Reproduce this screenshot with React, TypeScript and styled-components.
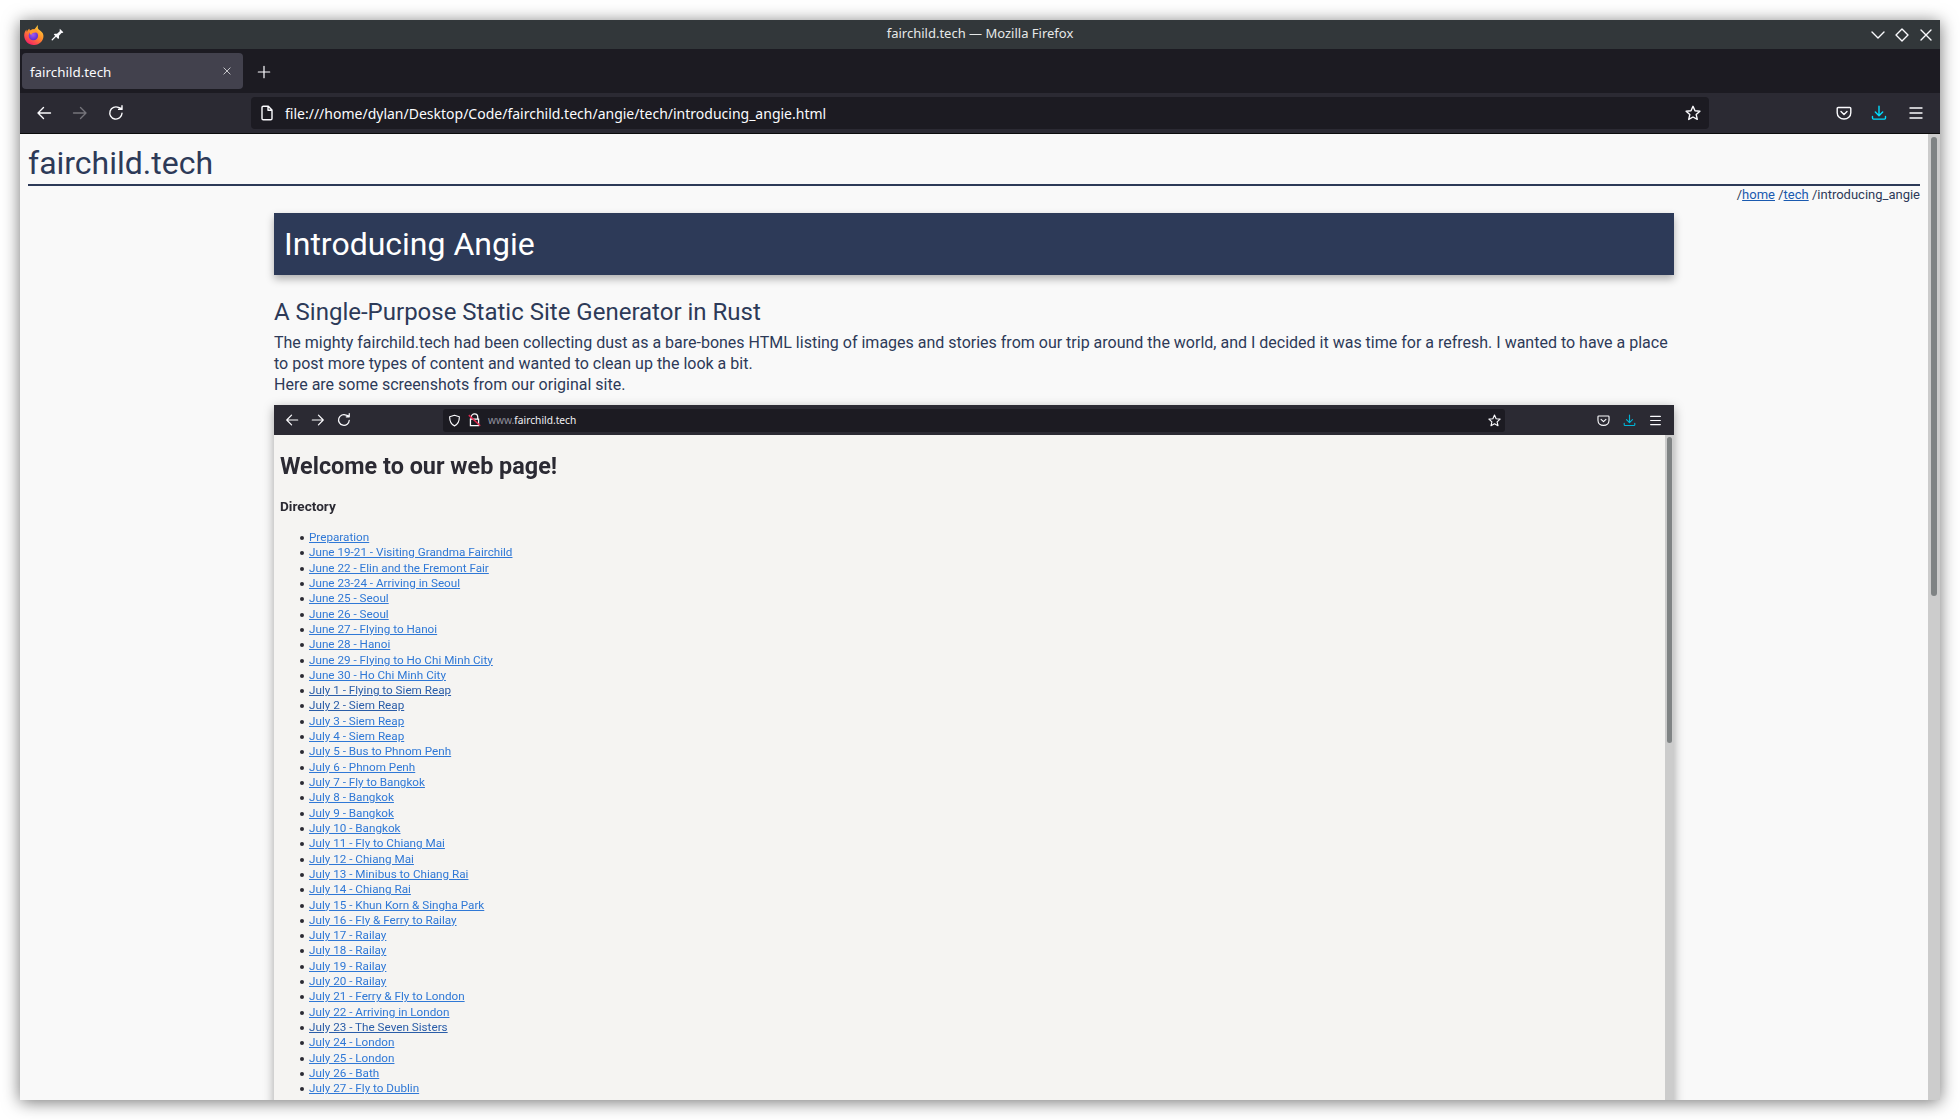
import React from 'react';
import styled, {createGlobalStyle} from 'styled-components';

const navy = '#2d3a58';
const chrome = '#2b2a33';
const urlBg = '#1c1b22';

const GlobalStyle = createGlobalStyle`
  html, body {
    margin: 0;
    padding: 0;
    background: #fff;
  }
  body {
    width: 1960px;
    height: 1120px;
    overflow: hidden;
  }
`;

const entries: [string, boolean?][] = [
    ['Preparation'],
    ['June 19-21 - Visiting Grandma Fairchild'],
    ['June 22 - Elin and the Fremont Fair'],
    ['June 23-24 - Arriving in Seoul'],
    ['June 25 - Seoul'],
    ['June 26 - Seoul'],
    ['June 27 - Flying to Hanoi'],
    ['June 28 - Hanoi'],
    ['June 29 - Flying to Ho Chi Minh City'],
    ['June 30 - Ho Chi Minh City'],
    ['July 1 - Flying to Siem Reap', true],
    ['July 2 - Siem Reap', true],
    ['July 3 - Siem Reap'],
    ['July 4 - Siem Reap'],
    ['July 5 - Bus to Phnom Penh'],
    ['July 6 - Phnom Penh'],
    ['July 7 - Fly to Bangkok'],
    ['July 8 - Bangkok'],
    ['July 9 - Bangkok'],
    ['July 10 - Bangkok'],
    ['July 11 - Fly to Chiang Mai'],
    ['July 12 - Chiang Mai'],
    ['July 13 - Minibus to Chiang Rai'],
    ['July 14 - Chiang Rai'],
    ['July 15 - Khun Korn & Singha Park'],
    ['July 16 - Fly & Ferry to Railay'],
    ['July 17 - Railay'],
    ['July 18 - Railay'],
    ['July 19 - Railay'],
    ['July 20 - Railay'],
    ['July 21 - Ferry & Fly to London'],
    ['July 22 - Arriving in London'],
    ['July 23 - The Seven Sisters', true],
    ['July 24 - London'],
    ['July 25 - London'],
    ['July 26 - Bath'],
    ['July 27 - Fly to Dublin'],
    ['July 28 - Dublin'],
];

const Desktop = styled.div`
  padding: 20px;
  width: 1920px;
  height: 1080px;
`;

const Window = styled.div`
  width: 1920px;
  height: 1080px;
  display: flex;
  flex-direction: column;
  overflow: hidden;
  background: #f9f9f9;
  box-shadow: 0 2px 16px rgba(0, 0, 0, .55);
`;

const TitleBar = styled.div`
  height: 29px;
  flex: none;
  background: #32373a;
  display: flex;
  align-items: center;
  padding: 0 4px 0 4px;
  position: relative;
`;

const TitleText = styled.div`
  position: absolute;
  left: 0;
  right: 0;
  top: 0;
  line-height: 27px;
  text-align: center;
  color: #e6e8e8;
  font-family: "Noto Sans", sans-serif;
  font-size: 13px;
  pointer-events: none;
`;

const TitleLeft = styled.div`
  display: flex;
  align-items: center;
  gap: 7px;
`;

const WindowControls = styled.div`
  margin-left: auto;
  display: flex;
  align-items: center;
  gap: 8px;
  padding-right: 2px;
`;

const TabBar = styled.div`
  height: 44px;
  flex: none;
  background: ${urlBg};
  display: flex;
  align-items: center;
  padding-left: 2px;
`;

const Tab = styled.div`
  width: 221px;
  height: 36px;
  box-sizing: border-box;
  background: #42414d;
  border-radius: 4px;
  display: flex;
  align-items: center;
  justify-content: space-between;
  padding: 0 11px 0 8px;
  color: #fbfbfe;
  font: 13.4px "Noto Sans", sans-serif;
`;

const TabLabel = styled.span`
  padding-top: 2px;
`;

const NewTab = styled.div`
  margin-left: 14px;
  padding-top: 1px;
  display: flex;
`;

const Toolbar = styled.div`
  height: 40px;
  flex: none;
  background: ${chrome};
  border-bottom: 1px solid #0c0c0d;
  display: flex;
  align-items: center;
  padding-left: 16px;
`;

const NavGroup = styled.div`
  display: flex;
  align-items: center;
  gap: 20px;
`;

const UrlBar = styled.div`
  width: 1458px;
  height: 32px;
  margin-left: 127px;
  background: ${urlBg};
  border-radius: 4px;
  display: flex;
  align-items: center;
  padding: 0 8px 0 8px;
  box-sizing: border-box;
  color: #fbfbfe;
  font: 14px "Noto Sans", sans-serif;
`;

const UrlText = styled.span`
  margin-left: 10px;
  flex: 1;
`;

const ToolbarEnd = styled.div`
  margin-left: 127px;
  display: flex;
  align-items: center;
  gap: 19px;
  svg:last-child {
    margin-left: 2px;
  }
`;

const Viewport = styled.div`
  flex: 1;
  min-height: 0;
  display: flex;
`;

const Page = styled.div`
  flex: 1;
  min-width: 0;
  padding: 0 8px;
  overflow: hidden;
  color: ${navy};
  font-family: Roboto, sans-serif;
`;

const Track = styled.div<{$width: number; $pad: number; $top: number}>`
  width: ${p => p.$width}px;
  flex: none;
  box-sizing: border-box;
  background: #cccccc;
  padding: ${p => p.$top}px ${p => p.$pad}px 0 ${p => p.$pad}px;
`;

const Thumb = styled.div<{$height: number}>`
  height: ${p => p.$height}px;
  background: #7f8384;
  border-radius: 3px;
`;

const SiteTitle = styled.div`
  height: 45px;
  padding-top: 5px;
  line-height: 48px;
  font-size: 32px;
  border-bottom: 2px solid ${navy};
`;

const Breadcrumb = styled.div`
  height: 18px;
  line-height: 18px;
  text-align: right;
  font-size: 13px;
  a {
    color: #1a5ab0;
  }
`;

const Column = styled.div`
  width: 1400px;
  margin: 9px auto 0;
`;

const Banner = styled.h1`
  margin: 0;
  height: 62px;
  padding: 0 10px;
  display: flex;
  align-items: center;
  background: ${navy};
  color: #fff;
  font-size: 32px;
  font-weight: 400;
  box-shadow: 0 4px 8px rgba(0, 0, 0, .3);
`;

const Subtitle = styled.h2`
  margin: 22px 0 5px;
  font-size: 24px;
  line-height: 30px;
  font-weight: 400;
`;

const Paragraph = styled.p`
  margin: 0 0 10px;
  font-size: 16px;
  line-height: 21px;
`;

const Shot = styled.div`
  height: 900px;
  display: flex;
  flex-direction: column;
  box-shadow: 0 3px 10px rgba(0, 0, 0, .35);
`;

const ShotToolbar = styled.div`
  height: 30px;
  flex: none;
  background: ${chrome};
  display: flex;
  align-items: center;
  padding-left: 11px;
`;

const ShotNav = styled.div`
  display: flex;
  align-items: center;
  gap: 12px;
`;

const ShotUrl = styled.div`
  width: 1062px;
  height: 23px;
  margin-left: 92px;
  box-sizing: border-box;
  background: ${urlBg};
  border-radius: 3px;
  display: flex;
  align-items: center;
  gap: 6px;
  padding: 0 4px 0 5px;
  color: #f1f1f4;
  font: 10.2px "Noto Sans", sans-serif;
  span {
    flex: 1;
    margin-left: 1px;
  }
  em {
    font-style: normal;
    color: #8f8f9d;
  }
`;

const ShotEnd = styled.div`
  margin-left: 92px;
  display: flex;
  align-items: center;
  gap: 13px;
`;

const ShotBody = styled.div`
  flex: 1;
  min-height: 0;
  display: flex;
  background: #f5f4f2;
`;

const ShotPage = styled.div`
  flex: 1;
  padding: 17px 0 0 6px;
  color: #2b2a33;
  filter: blur(.25px);
`;

const Welcome = styled.div`
  font-size: 23.4px;
  font-weight: 700;
  line-height: 28px;
`;

const Directory = styled.div`
  margin-top: 19px;
  font-size: 13.6px;
  font-weight: 700;
  line-height: 15px;
`;

const Entries = styled.ul`
  list-style: none;
  margin: 16px 0 0;
  padding-left: 29px;
  font-size: 11.7px;
  line-height: 15.31px;
`;

const Entry = styled.li`
  position: relative;
  &::before {
    content: '';
    position: absolute;
    left: -9px;
    top: 6px;
    width: 4px;
    height: 4px;
    border-radius: 50%;
    background: #2b2a33;
  }
`;

const EntryLink = styled.a<{$seen?: boolean}>`
  color: ${p => (p.$seen ? '#2a5da8' : '#2f78d6')};
  text-decoration: underline;
`;

const Svg = styled.svg<{$c?: string}>`
  display: block;
  flex: none;
  fill: none;
  stroke: ${p => p.$c || '#fbfbfe'};
  stroke-width: 1.4;
  stroke-linecap: round;
  stroke-linejoin: round;
`;

type IconProps = {size?: number; c?: string};

const icon = (body: React.ReactNode) => ({size = 16, c}: IconProps) => (
    <Svg $c={c} width={size} height={size} viewBox="0 0 16 16">{body}</Svg>
);

const BackIcon = icon(<path d="M14.5 8H2M7.5 2.5 2 8l5.5 5.5"/>);
const ForwardIcon = icon(<path d="M1.5 8H14M8.5 2.5 14 8l-5.5 5.5"/>);
const ReloadIcon = icon(<path d="M14 8.3A6.1 6.1 0 1 1 10.6 2.5L13.6 3.6M14 .8v3.6h-3.4"/>);
const PageIcon = icon(<path d="M3 2.5c0-.8.6-1.3 1.3-1.3h5L13 5v8.5c0 .7-.6 1.3-1.3 1.3H4.3C3.600 14.800 3 14.200 3 13.500zM9 1.500V5.300h4"/>);
const StarIcon = icon(<path d="M8 1.300l2 4.500 4.900.5-3.700 3.300 1.100 4.800L8 12l-4.300 2.400 1.100-4.800L1.100 6.300 6 5.800z"/>);
const PocketIcon = icon(<><path d="M2.200 2.500h11.600c.6 0 1 .4 1 1v4.200c0 3.800-3 6.300-6.800 6.300s-6.800-2.500-6.800-6.300V3.500c0-.6.4-1 1-1z"/><path d="M5 6.500l3 3 3-3"/></>);
const DownloadIcon = icon(<path d="M8 1.300V10.500M4.300 7 8 10.700 11.700 7M1.500 11.500v1.600c0 .6.400 1 1 1h11c.6 0 1-.4 1-1v-1.600"/>);
const MenuIcon = icon(<path d="M2 3h12M2 8h12M2 13h12"/>);
const CloseIcon = icon(<path d="M3 3l10 10M13 3 3 13"/>);
const PlusIcon = icon(<path d="M8 1.500v13M1.500 8h13"/>);
const ChevronIcon = icon(<path d="M2 5l6 6 6-6"/>);
const DiamondIcon = icon(<path d="M8 2l6 6-6 6-6-6z"/>);
const ShieldIcon = icon(<path d="M8 1.500 14 3.300c0 5.600-1.800 9.400-6 11.300C3.800 12.700 2 8.900 2 3.300z"/>);

const PinIcon = () => (
    <svg width="13" height="13" viewBox="0 0 16 16" style={{display: 'block'}}>
        <path fill="#fbfbfe" d="M10.800.8l4.400 4.400-1.200 1-1.100-.1-3.100 3.400.1 2.900-1 1.100-5.400-5.400 1-1.100 2.900.1 3.400-3.100-.1-1.100z"/>
        <path stroke="#fbfbfe" strokeWidth="1.500" strokeLinecap="round" d="M5.500 10.500 1.500 14.500"/>
    </svg>
);

const InsecureLockIcon = () => (
    <svg width="13" height="14" viewBox="0 0 16 16" fill="none" style={{display: 'block', flex: 'none', marginLeft: '1px'}}>
        <path d="M4 7V4.500a4 4 0 0 1 8 0V7M3 7h10v8H3z" stroke="#fbfbfe" strokeWidth="1.600"/>
        <path d="M1 2l14 13" stroke="#e22850" strokeWidth="1.800"/>
    </svg>
);

const FirefoxLogo = () => (
    <svg width="20" height="20" viewBox="0 0 32 32" style={{display: 'block'}}>
        <defs>
            <linearGradient id="ff-flame" x1="0.8" y1="0.05" x2="0.2" y2="1">
                <stop offset="0" stopColor="#ffd23c"/>
                <stop offset=".45" stopColor="#ff8a2b"/>
                <stop offset="1" stopColor="#f5156c"/>
            </linearGradient>
            <radialGradient id="ff-globe" cx=".45" cy=".4" r=".6">
                <stop offset="0" stopColor="#a45cf0"/>
                <stop offset="1" stopColor="#5a2bd0"/>
            </radialGradient>
        </defs>
        <path fill="url(#ff-flame)" d="M22 0c.5 3-1 5.500 2 7.500 4 2.700 6.500 4.500 7 9 .9 8-5.500 15-14.500 15.500C8 32.300.8 26.200.3 17.500.1 13.500 1.500 9.500 4 7c-.2 1.700 0 3 .8 4 .6-2.300 2-4 4.200-5-.3 1.500 0 2.500.8 3.200C12.500 7.500 14 7 16 7.500c2-2 3.500-4 6-7.500z"/>
        <circle cx="15" cy="17" r="7.500" fill="url(#ff-globe)"/>
        <path fill="#ff9a2e" d="M9 9.500c3-3 9-3.500 12.500-.5 2.500 2 3.500 5.500 2.500 8.500-.5-3-2.500-5.500-5.500-5.500-3.500 0-6 1-7 4-2-1.500-3.500-4-2.500-6.500z"/>
    </svg>
);

export default function App() {
    return (
        <>
            <GlobalStyle/>
            <Desktop>
                <Window>
                    <TitleBar>
                        <TitleLeft>
                            <FirefoxLogo/>
                            <PinIcon/>
                        </TitleLeft>
                        <TitleText>fairchild.tech — Mozilla Firefox</TitleText>
                        <WindowControls>
                            <ChevronIcon size={16}/>
                            <DiamondIcon size={16}/>
                            <CloseIcon size={16}/>
                        </WindowControls>
                    </TitleBar>
                    <TabBar>
                        <Tab>
                            <TabLabel>fairchild.tech</TabLabel>
                            <CloseIcon size={10} c="#d8d8dc"/>
                        </Tab>
                        <NewTab><PlusIcon size={14}/></NewTab>
                    </TabBar>
                    <Toolbar>
                        <NavGroup>
                            <BackIcon/>
                            <ForwardIcon c="#75747b"/>
                            <ReloadIcon/>
                        </NavGroup>
                        <UrlBar>
                            <PageIcon/>
                            <UrlText>file:///home/dylan/Desktop/Code/fairchild.tech/angie/tech/introducing_angie.html</UrlText>
                            <StarIcon/>
                        </UrlBar>
                        <ToolbarEnd>
                            <PocketIcon/>
                            <DownloadIcon c="#00ddff"/>
                            <MenuIcon/>
                        </ToolbarEnd>
                    </Toolbar>
                    <Viewport>
                        <Page>
                            <SiteTitle>fairchild.tech</SiteTitle>
                            <Breadcrumb>/<a href="#home">home</a> /<a href="#tech">tech</a> /introducing_angie</Breadcrumb>
                            <Column>
                                <Banner>Introducing Angie</Banner>
                                <Subtitle>A Single-Purpose Static Site Generator in Rust</Subtitle>
                                <Paragraph>
                                    The mighty fairchild.tech had been collecting dust as a bare-bones HTML listing of images and stories from our trip around the world, and I decided it was time for a refresh. I wanted to have a place to post more types of content and wanted to clean up the look a bit.
                                    <br/>
                                    Here are some screenshots from our original site.
                                </Paragraph>
                                <Shot>
                                    <ShotToolbar>
                                        <ShotNav>
                                            <BackIcon size={14}/>
                                            <ForwardIcon size={14}/>
                                            <ReloadIcon size={14}/>
                                        </ShotNav>
                                        <ShotUrl>
                                            <ShieldIcon size={13}/>
                                            <InsecureLockIcon/>
                                            <span><em>www.</em>fairchild.tech</span>
                                            <StarIcon size={13}/>
                                        </ShotUrl>
                                        <ShotEnd>
                                            <PocketIcon size={13}/>
                                            <DownloadIcon size={13} c="#00b3d6"/>
                                            <MenuIcon size={13}/>
                                        </ShotEnd>
                                    </ShotToolbar>
                                    <ShotBody>
                                        <ShotPage>
                                            <Welcome>Welcome to our web page!</Welcome>
                                            <Directory>Directory</Directory>
                                            <Entries>
                                                {entries.map(([label, seen]) => (
                                                    <Entry key={label}>
                                                        <EntryLink $seen={seen} href="#entry">{label}</EntryLink>
                                                    </Entry>
                                                ))}
                                            </Entries>
                                        </ShotPage>
                                        <Track $width={9} $pad={2} $top={2}><Thumb $height={306}/></Track>
                                    </ShotBody>
                                </Shot>
                            </Column>
                        </Page>
                        <Track $width={12} $pad={3} $top={3}><Thumb $height={459}/></Track>
                    </Viewport>
                </Window>
            </Desktop>
        </>
    );
}
